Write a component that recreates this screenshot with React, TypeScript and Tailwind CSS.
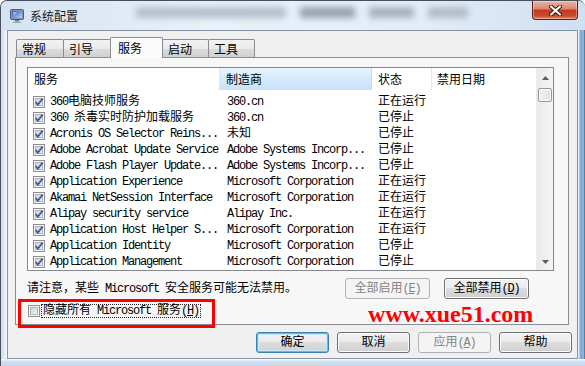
import type { ReactNode } from "react"

type Row = [string, string, string]

const rows: Row[] = [
  ["360电脑技师服务", "360.cn", "正在运行"],
  ["360 杀毒实时防护加载服务", "360.cn", "已停止"],
  ["Acronis OS Selector Reins...", "未知", "已停止"],
  ["Adobe Acrobat Update Service", "Adobe Systems Incorp...", "已停止"],
  ["Adobe Flash Player Update...", "Adobe Systems Incorp...", "已停止"],
  ["Application Experience", "Microsoft Corporation", "正在运行"],
  ["Akamai NetSession Interface", "Microsoft Corporation", "正在运行"],
  ["Alipay security service", "Alipay Inc.", "正在运行"],
  ["Application Host Helper S...", "Microsoft Corporation", "正在运行"],
  ["Application Identity", "Microsoft Corporation", "已停止"],
  ["Application Management", "Microsoft Corporation", "已停止"],
  ["Application Information", "Microsoft Corporation", "正在运行"],
]

const tabs = ["常规", "引导", "服务", "启动", "工具"]

// SimSun-style: latin half width (6px), CJK full width (12px)
function Mixed({ text }: { text: string }) {
  const parts = text.split(/([\x20-\x7e]+)/).filter(Boolean)
  return (
    <>
      {parts.map((p, i) =>
        /^[\x20-\x7e]+$/.test(p) ? (
          <span key={i} className="tracking-[-1.2px]">
            {p}
          </span>
        ) : (
          <span key={i}>{p}</span>
        )
      )}
    </>
  )
}

function CheckBox({ checked }: { checked: boolean }) {
  return (
    <svg width="12" height="12" viewBox="0 0 12 12" className="shrink-0">
      <defs>
        <linearGradient id={checked ? "cbOn" : "cbOff"} x1="0" y1="0" x2="1" y2="1">
          <stop offset="0" stopColor="#cbcfd5" />
          <stop offset="1" stopColor="#f6f6f6" />
        </linearGradient>
      </defs>
      <rect x="0.5" y="0.5" width="11" height="11" fill="#f4f4f4" stroke="#8e8f8f" />
      <rect x="2.5" y="2.5" width="7" height="7" fill={`url(#${checked ? "cbOn" : "cbOff"})`} stroke="#b0b4ba" />
      {checked && (
        <path d="M2.6 6.2 L4.9 8.6 L9.6 2.6" fill="none" stroke="#3f5d9c" strokeWidth="1.8" />
      )}
    </svg>
  )
}

function Btn({
  children,
  w,
  disabled,
  primary,
}: {
  children: ReactNode
  w: string
  disabled?: boolean
  primary?: boolean
}) {
  const base = "h-[21px] flex items-center justify-center rounded-[3px] border text-[12px] whitespace-pre"
  const look = disabled
    ? "border-[#adb2b5] bg-[#f4f4f4] text-[#838383]"
    : primary
      ? "border-[#3c7fb1] bg-[linear-gradient(#f2f2f2_0%,#ebebeb_50%,#dddddd_50%,#cfcfcf_100%)] text-black shadow-[inset_0_0_0_1px_#48c6f2,inset_0_0_0_2px_#c7eafb]"
      : "border-[#707070] bg-[linear-gradient(#f2f2f2_0%,#ebebeb_50%,#dddddd_50%,#cfcfcf_100%)] text-black shadow-[inset_0_0_0_1px_#fbfbfb]"
  return <div className={`${base} ${look} ${w}`}>{children}</div>
}

function Arrow({ up }: { up?: boolean }) {
  return (
    <svg width="7" height="4" viewBox="0 0 7 4">
      <path d={up ? "M0 4 L3.5 0 L7 4 Z" : "M0 0 L3.5 4 L7 0 Z"} fill="#5c5c5c" />
    </svg>
  )
}

function Acc({ k }: { k: string }) {
  return (
    <span className="tracking-[-1.2px]">
      (<span className="underline">{k}</span>)
    </span>
  )
}

export default function App() {
  return (
    <div className="relative w-[585px] h-[366px] overflow-hidden rounded-t-[7px] border-l border-t border-[#46505c] bg-[linear-gradient(180deg,#dde8f4,#c6d8ec)] font-['Liberation_Mono','Noto_Sans_CJK_SC',monospace] text-[12px] text-black">
      {/* title bar */}
      <div className="flex h-[29px] bg-[linear-gradient(90deg,#d5e3f1_0%,#e9f0f8_35%,#e4edf7_70%,#cfe0f2_100%)]">
        <div className="flex items-center pl-[9px]">
          <svg width="14" height="14" viewBox="0 0 14 14">
            <defs>
              <linearGradient id="scr" x1="0" y1="0" x2="1" y2="1">
                <stop offset="0" stopColor="#2a5bc4" />
                <stop offset="0.55" stopColor="#6f9de8" />
                <stop offset="1" stopColor="#c6dcf8" />
              </linearGradient>
            </defs>
            <rect x="0.5" y="0.5" width="13" height="10" rx="1" fill="#8393aa" stroke="#4e5d74" />
            <rect x="2" y="2" width="10" height="7" fill="url(#scr)" />
            <path d="M3 3 L7 3 L4 7 Z" fill="#ffffff" opacity="0.45" />
            <rect x="5" y="11" width="4" height="1.5" fill="#66768c" />
            <rect x="3" y="12.5" width="8" height="1.5" rx="0.5" fill="#9aa7b8" />
          </svg>
          <span className="ml-[6px] font-['Noto_Sans_CJK_SC',sans-serif] text-[12px] text-[#1a1a1a] leading-none">
            系统配置
          </span>
        </div>
        <div className="flex flex-1 items-start gap-[14px] pl-[58px] pt-[6px] blur-[3px]">
          <div className="h-[11px] w-[150px] bg-[#b5bfcb]" />
          <div className="h-[11px] w-[55px] bg-[#98a3b1]" />
          <div className="h-[11px] w-[45px] bg-[#a8b2be]" />
          <div className="h-[11px] w-[40px] bg-[#b3bcc7]" />
        </div>
        <div className="mr-[7px] flex h-[19px] w-[46px] items-center justify-center self-start rounded-b-[4px] border border-t-0 border-[#5a1f16] bg-[linear-gradient(180deg,#eab3a3_0%,#dc8a74_42%,#c4391f_52%,#cc4a2c_82%,#e58366_100%)] shadow-[inset_0_0_0_1px_rgba(255,255,255,0.35)]">
          <svg width="13" height="11" viewBox="0 0 13 11">
            <path d="M2 1.5 L11 9.5 M11 1.5 L2 9.5" stroke="#3b0f08" strokeWidth="4" strokeLinecap="round" />
            <path d="M2 1.5 L11 9.5 M11 1.5 L2 9.5" stroke="#ffffff" strokeWidth="2.2" strokeLinecap="round" />
          </svg>
        </div>
      </div>

      {/* frame + client */}
      <div className="flex h-[329px]">
        <div className="w-[6px] bg-[linear-gradient(90deg,#cddcec,#e6eef7_70%,#ffffff)]" />
        <div className="flex h-[329px] w-[571px] flex-col border border-[#8392a4] bg-[#f0f0f0]">
          {/* tabs */}
          <div className="flex h-[26px] items-end pl-[8px]">
            {tabs.map((t, i) =>
              t === "服务" ? (
                <div
                  key={t}
                  className="relative z-10 -ml-px mb-[-1px] flex h-[21px] w-[53px] items-start rounded-t-[2px] border border-b-0 border-[#898c95] bg-[#fbfbfb] pl-[7px] pt-[1px] font-['Noto_Sans_CJK_SC',sans-serif]"
                >
                  {t}
                </div>
              ) : (
                <div
                  key={t}
                  className={`flex h-[18px] items-center rounded-t-[2px] border border-b-0 border-[#898c95] bg-[linear-gradient(#f2f2f2_0%,#ebebeb_50%,#dddddd_50%,#cfcfcf_100%)] pl-[5px] pt-[1px] font-['Noto_Sans_CJK_SC',sans-serif] ${i === 0 ? "w-[48px]" : "-ml-px w-[47px]"} ${i === 1 ? "w-[48px]" : ""}`}
                >
                  {t}
                </div>
              )
            )}
          </div>

          {/* tab page */}
          <div className="ml-[7px] flex h-[268px] w-[554px] flex-col border border-[#898c95] bg-[#f7f7f7] pl-[11px] pt-[9px]">
            {/* list view */}
            <div className="flex h-[204px] w-[527px] border border-[#828790] bg-white">
              <div className="flex w-[508px] flex-col overflow-hidden">
                <div className="flex h-[22px] shrink-0 font-['Noto_Sans_CJK_SC',sans-serif]">
                  <div className="flex w-[192px] items-center border-r border-[#e3e6ea] pl-[6px]">服务</div>
                  <div className="flex w-[152px] items-center border-r border-[#bcdcf4] bg-[linear-gradient(#e6f3fd,#c7e2f8)] pl-[6px]">
                    制造商
                  </div>
                  <div className="flex w-[60px] items-center border-r border-[#e3e6ea] pl-[6px]">状态</div>
                  <div className="flex w-[104px] items-center pl-[5px]">禁用日期</div>
                </div>
                <div className="flex flex-col pt-[4px]">
                  {rows.map(([name, maker, state]) => (
                    <div key={name} className="flex h-[16px] shrink-0 items-center whitespace-pre">
                      <div className="flex w-[192px] items-center overflow-hidden pl-[5px]">
                        <CheckBox checked />
                        <span className="ml-[5px]">
                          <Mixed text={name} />
                        </span>
                      </div>
                      <div className="w-[152px] overflow-hidden pl-[7px]">
                        <Mixed text={maker} />
                      </div>
                      <div className="w-[60px] pl-[6px]">{state}</div>
                    </div>
                  ))}
                </div>
              </div>
              {/* scrollbar */}
              <div className="flex w-[17px] flex-col border-l border-[#ececec] bg-[linear-gradient(90deg,#e9e9e9,#f5f5f5)]">
                <div className="flex h-[17px] shrink-0 items-center justify-center pt-[3px]">
                  <Arrow up />
                </div>
                <div className="mx-px mt-[3px] h-[14px] shrink-0 rounded-[2px] border border-[#979797] bg-[linear-gradient(90deg,#f3f3f3,#e2e2e2)] shadow-[inset_0_0_0_1px_#fbfbfb]" />
                <div className="flex-1" />
                <div className="flex h-[17px] shrink-0 items-center justify-center">
                  <Arrow />
                </div>
              </div>
            </div>

            {/* note + enable/disable buttons */}
            <div className="mt-[7px] flex h-[21px] w-[527px] items-center pr-[25px] whitespace-pre">
              <div className="flex-1">
                <Mixed text="请注意，某些 Microsoft 安全服务可能无法禁用。" />
              </div>
              <div className="flex gap-[14px]">
                <Btn w="w-[85px]" disabled>
                  全部启用<Acc k="E" />
                </Btn>
                <Btn w="w-[85px]">
                  全部禁用<Acc k="D" />
                </Btn>
              </div>
            </div>

            {/* hide microsoft services */}
            <div className="mt-[5px] flex h-[14px] items-center whitespace-pre">
              <div className="ml-px">
                <CheckBox checked={false} />
              </div>
              <div className="ml-px flex h-[14px] items-center border border-dotted border-[#222] px-px">
                <Mixed text="隐藏所有 Microsoft 服务" />
                <Acc k="H" />
              </div>
            </div>
          </div>

          {/* dialog buttons */}
          <div className="mt-[7px] flex justify-end gap-[8px] pr-[5px] whitespace-pre">
            <Btn w="w-[73px]" primary>
              确定
            </Btn>
            <Btn w="w-[73px]">取消</Btn>
            <Btn w="w-[73px]" disabled>
              应用<Acc k="A" />
            </Btn>
            <Btn w="w-[73px]">帮助</Btn>
          </div>
        </div>
        <div className="flex-1 bg-[linear-gradient(90deg,#ffffff_0%,#c5d8ee_15%,#6f9fd6_45%,#9cc0e8_75%,#4f5d6d_100%)]" />
      </div>
      <div className="h-[8px] border-b border-[#4a5766] bg-[linear-gradient(180deg,#ffffff,#d6e3f1_30%,#c2d5ea)]" />

      {/* annotation overlays */}
      <div className="absolute left-[17px] top-[298px] h-[29px] w-[197px] border-[3px] border-[#ff0000]" />
      <div className="absolute left-[367px] top-[301px] h-[24px] font-['Liberation_Serif',serif] text-[24px] font-bold leading-none text-[#ff0000]">
        www.xue51.com
      </div>
    </div>
  )
}
